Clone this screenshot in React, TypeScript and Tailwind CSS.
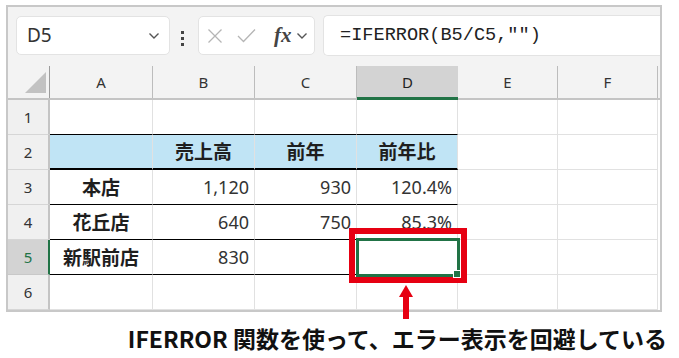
import React from 'react';

const jp = { fontFamily: '"Noto Sans CJK JP", "Noto Sans", sans-serif' };
const ui = { fontFamily: '"Noto Sans", "Noto Sans CJK JP", sans-serif' };

const colW = ['w-[103px]', 'w-[102px]', 'w-[102px]', 'w-[101px]', 'w-[100px]', 'w-[100px]'];
const colNames = ['A', 'B', 'C', 'D', 'E', 'F'];

type Cell = { text?: string; kind?: 'jp' | 'num' };

const rows: { n: number; cells: Cell[] }[] = [
  { n: 1, cells: [{}, {}, {}, {}] },
  { n: 2, cells: [{}, { text: '売上高', kind: 'jp' }, { text: '前年', kind: 'jp' }, { text: '前年比', kind: 'jp' }] },
  { n: 3, cells: [{ text: '本店', kind: 'jp' }, { text: '1,120', kind: 'num' }, { text: '930', kind: 'num' }, { text: '120.4%', kind: 'num' }] },
  { n: 4, cells: [{ text: '花丘店', kind: 'jp' }, { text: '640', kind: 'num' }, { text: '750', kind: 'num' }, { text: '85.3%', kind: 'num' }] },
  { n: 5, cells: [{ text: '新駅前店', kind: 'jp' }, { text: '830', kind: 'num' }, {}, {}] },
  { n: 6, cells: [{}, {}, {}, {}] },
];

function Chevron() {
  return (
    <svg width="12" height="8" viewBox="0 0 12 8">
      <polyline points="1.5,1.5 6,6 10.5,1.5" fill="none" stroke="#555" strokeWidth="1.4" />
    </svg>
  );
}

// borders of the small table (columns A-D)
function tableBorder(n: number) {
  if (n === 1 || n === 3 || n === 4 || n === 5) return 'border-b border-b-black';
  if (n === 2) return 'border-b-2 border-b-black bg-[#c0e4f5]';
  return 'border-b border-b-[#e1e1e1]';
}

export default function App() {
  return (
    <div className="w-[679px] h-[358px] bg-white overflow-hidden" style={ui}>
      <div className="ml-[6px] mt-[5px] w-[656px] border-2 border-[#c8c8c8] bg-[#f3f3f3]">
        {/* formula bar */}
        <div className="h-[59px] flex items-start">
          <div className="ml-[8px] mt-[9px] w-[154px] h-[39px] bg-white rounded-[5px] border border-[#e3e3e3] flex items-center justify-between pl-[10px] pr-[9px]">
            <span className="text-[19px] text-[#333]">D5</span>
            <Chevron />
          </div>
          <div className="mt-[24px] ml-[11px] w-[3px] flex flex-col gap-[3px]">
            <div className="h-[3px] bg-[#444]" />
            <div className="h-[3px] bg-[#444]" />
            <div className="h-[3px] bg-[#444]" />
          </div>
          <div className="ml-[14px] mt-[9px] w-[117px] h-[39px] bg-white rounded-[5px] border border-[#e3e3e3] flex items-center pl-[8px] pr-[6px]">
            <svg width="16" height="16" viewBox="0 0 16 16">
              <path d="M1.5 1.5 L14.5 14.5 M14.5 1.5 L1.5 14.5" stroke="#b5b5b5" strokeWidth="1.3" />
            </svg>
            <svg className="ml-[14px]" width="19" height="15" viewBox="0 0 19 15">
              <polyline points="1,8 6.5,13.5 18,1.5" fill="none" stroke="#b5b5b5" strokeWidth="1.3" />
            </svg>
            <span className="ml-[18px] text-[21px] italic font-bold text-[#444] leading-none" style={{ fontFamily: '"Liberation Serif", serif' }}>
              fx
            </span>
            <span className="ml-[4px]">
              <Chevron />
            </span>
          </div>
          <div className="ml-[8px] mt-[8px] flex-1 h-[41px] bg-white rounded-l-[5px] border-y border-l border-[#e3e3e3] flex items-center pl-[16px]">
            <span className="text-[18.6px] text-[#222]" style={{ fontFamily: '"Liberation Mono", monospace' }}>
              =IFERROR(B5/C5,"")
            </span>
          </div>
        </div>

        {/* grid */}
        <div className="relative">
          <div className="flex h-[34px] border-b-2 border-[#c4c4c4]">
            <div className="w-[42px] relative border-r border-[#9c9c9c]">
              <svg className="absolute left-[17px] top-[6px]" width="21" height="21" viewBox="0 0 21 21">
                <polygon points="21,0 21,21 0,21" fill="#c2c2c2" />
              </svg>
            </div>
            {colNames.map((c, i) => (
              <div
                key={c}
                className={`${colW[i]} flex items-center justify-center text-[15px] ${
                  c === 'D' ? 'bg-[#d3d3d3] text-[#222] border-b-[3px] border-b-[#217346] -mb-[2px] pt-[1px]' : 'text-[#333] border-r border-[#bcbcbc]'
                }`}
              >
                {c}
              </div>
            ))}
          </div>
          {rows.map((r) => (
            <div key={r.n} className="flex h-[35px] bg-white">
              <div
                className={`w-[42px] flex items-center justify-center text-[15px] border-b ${
                  r.n === 5
                    ? 'bg-[#d3d3d3] text-[#217346] border-r-2 border-r-[#217346] border-b-[#c8c8c8]'
                    : 'bg-[#f0f0f0] text-[#333] border-r-2 border-r-[#c4c4c4] border-b-[#d6d6d6]'
                }`}
              >
                {r.n}
              </div>
              {colNames.map((c, i) => {
                const cell = i < 4 ? r.cells[i] : {};
                const border = i < 4 ? tableBorder(r.n) : 'border-b border-b-[#e1e1e1]';
                const align = cell.kind === 'num' ? 'justify-end pr-[5px]' : 'justify-center';
                const font =
                  cell.kind === 'jp' ? 'text-[19px] font-bold text-[#1e1e1e]' : 'text-[18px] text-[#333]';
                return (
                  <div
                    key={c}
                    className={`${colW[i]} flex items-center border-r border-r-[#e1e1e1] ${border} ${align} ${font}`}
                    style={cell.kind === 'jp' ? jp : ui}
                  >
                    {cell.text}
                  </div>
                );
              })}
            </div>
          ))}

          {/* selection on D5 */}
          <div className="absolute left-[348px] top-[172px] w-[104px] h-[39px] border-[3px] border-[#217346]" />
          {/* red callout */}
          <div className="absolute left-[341px] top-[162px] w-[118px] h-[55px] border-[6px] border-[#e60012]" />
          <div className="absolute left-[445px] top-[204px] w-[8px] h-[8px] bg-[#217346] border border-white" />
        </div>
      </div>

      <svg className="absolute left-[398px] top-[284px]" width="16" height="36" viewBox="0 0 16 36">
        <polygon points="8,1 15,13 1,13" fill="#e60012" />
        <rect x="5" y="12" width="6" height="23" fill="#e60012" />
      </svg>

      <div className="mt-[12px] pr-[12px] text-right text-[23px] font-bold text-[#111] leading-[29px]" style={jp}>
        IFERROR 関数を使って、エラー表示を回避している
      </div>
    </div>
  );
}
